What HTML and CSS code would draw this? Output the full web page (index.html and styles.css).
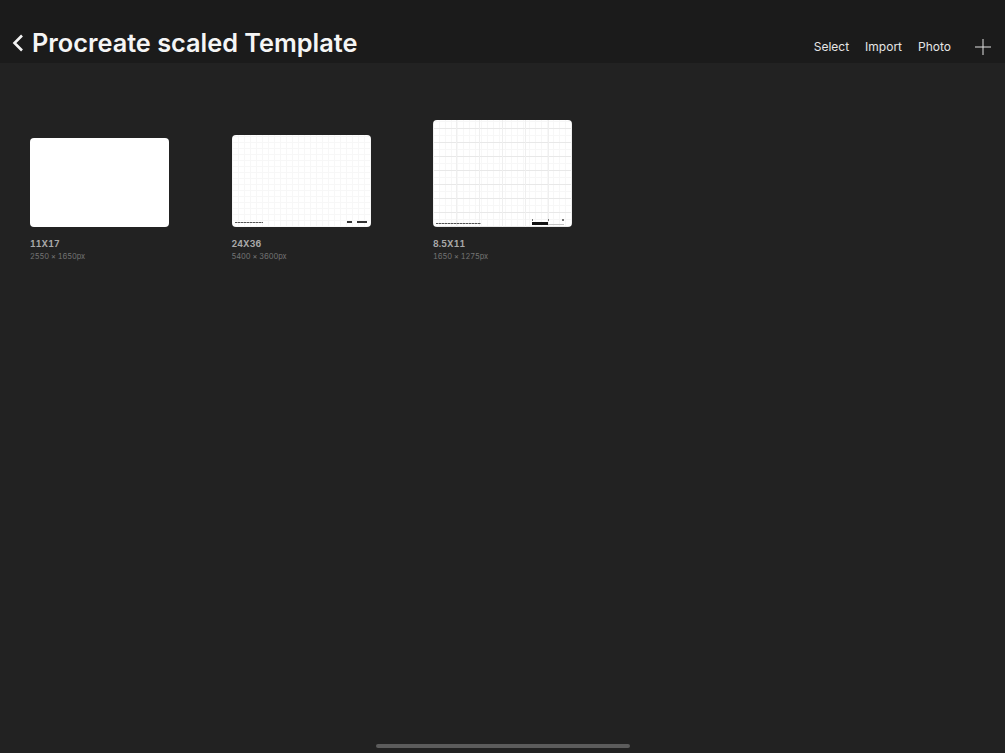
FILE: index.html
```html
<!DOCTYPE html>
<html lang="en">
<head>
<meta charset="utf-8">
<title>Procreate scaled Template</title>
<link rel="stylesheet" href="styles.css">
</head>
<body>
<div class="app">
  <header class="topbar">
    <div class="title-group">
      <svg class="back" width="12" height="18" viewBox="0 0 12 18" aria-hidden="true"><path d="M10 1.5 L2.5 9 L10 16.5" fill="none" stroke="#f4f4f4" stroke-width="2.6"/></svg>
      <h1 class="title">Procreate scaled Template</h1>
    </div>
    <nav class="actions">
      <span class="action">Select</span>
      <span class="action">Import</span>
      <span class="action">Photo</span>
      <svg class="plus" width="16" height="16" viewBox="0 0 16 16" aria-hidden="true"><path d="M8 0V16M0 8H16" stroke="#e2e2e2" stroke-width="1"/></svg>
    </nav>
  </header>
  <main class="gallery">
    <article class="card">
      <div class="thumb thumb-a"></div>
      <div class="name">11X17</div>
      <div class="size">2550 × 1650px</div>
    </article>
    <article class="card">
      <div class="thumb thumb-b grid-fine">
        <div class="foot foot-b">
          <span class="fineprint fineprint-b"></span>
          <span class="bars"><i class="bar bar-s"></i><i class="bar bar-l"></i></span>
        </div>
      </div>
      <div class="name">24X36</div>
      <div class="size">5400 × 3600px</div>
    </article>
    <article class="card">
      <div class="thumb thumb-c grid-wide">
        <div class="foot foot-c">
          <span class="fineprint fineprint-c"></span>
          <span class="scale"><i class="seg seg-dark"></i><i class="seg seg-light"></i></span>
        </div>
      </div>
      <div class="name">8.5X11</div>
      <div class="size">1650 × 1275px</div>
    </article>
  </main>
  <div class="home-wrap"><div class="home"></div></div>
</div>
</body>
</html>
```

FILE: styles.css
```css
* { box-sizing: border-box; }
html, body { margin: 0; height: 100%; }
body {
  background: #222222;
  font-family: Inter, "Liberation Sans", sans-serif;
  overflow: hidden;
}
.app {
  width: 1005px;
  height: 753px;
  display: flex;
  flex-direction: column;
}
.topbar {
  height: 63px;
  flex: none;
  background: #1b1b1b;
  display: flex;
  justify-content: space-between;
  align-items: flex-end;
  padding: 0 14px 6px 12px;
}
.title-group {
  display: flex;
  align-items: center;
  gap: 8px;
  margin-bottom: -3px;
}
.back { display: block; }
.title {
  margin: 0;
  font-size: 25.3px;
  line-height: 34px;
  font-weight: 600;
  color: #f5f5f5;
}
.actions {
  display: flex;
  align-items: center;
  height: 20px;
  gap: 16px;
}
.action {
  font-size: 12px;
  line-height: 16px;
  color: #e6e6e6;
}
.plus { margin-left: 8px; }
.gallery {
  height: 199px;
  flex: none;
  display: flex;
  align-items: flex-end;
  gap: 62.5px;
  padding-left: 30px;
}
.card { width: 139px; }
.thumb {
  width: 139px;
  background: #ffffff;
  border-radius: 4px;
  position: relative;
}
.thumb-a { height: 89px; }
.thumb-b { height: 92px; }
.thumb-c { height: 107px; }
.grid-fine {
  background-image:
    repeating-linear-gradient(90deg, #f7f7f7 0 1px, transparent 1px 6px),
    repeating-linear-gradient(0deg, #f7f7f7 0 1px, transparent 1px 6px);
}
.grid-wide {
  background-image:
    repeating-linear-gradient(90deg, #efefef 0 1px, transparent 1px 23px),
    repeating-linear-gradient(0deg, #e8e8e8 0 1px, transparent 1px 14px),
    repeating-linear-gradient(90deg, #f7f7f7 0 1px, transparent 1px 6px),
    repeating-linear-gradient(0deg, #f7f7f7 0 1px, transparent 1px 7px);
}
.foot {
  position: absolute;
  left: 3px;
  right: 3px;
  bottom: 3px;
  height: 4px;
  display: flex;
  justify-content: space-between;
  align-items: center;
}
.foot-c { bottom: 2px; }
.fineprint {
  display: block;
  height: 1px;
  background: repeating-linear-gradient(90deg, #555 0 2px, #aaa 2px 3px);
}
.fineprint-b { width: 28px; }
.fineprint-c { width: 45px; }
.bars { display: flex; gap: 5px; margin-right: 1px; }
.bar { display: block; height: 2px; background: #333; }
.bar-s { width: 5px; }
.bar-l { width: 10px; }
.scale { display: flex; margin-right: 5px; position: relative; }
.seg { display: block; width: 16px; height: 3px; position: relative; }
.seg-dark { background: #111; }
.seg-light { border-bottom: 1px solid #c4c4c4; }
.seg::before {
  content: "";
  position: absolute;
  left: 0;
  top: -3px;
  width: 1px;
  height: 2px;
  background: #777;
}
.seg-light::after {
  content: "";
  position: absolute;
  right: 0;
  top: -3px;
  width: 2px;
  height: 2px;
  background: #777;
}
.name {
  margin-top: 11px;
  font-size: 8.8px;
  line-height: 11px;
  font-weight: 700;
  font-variant-numeric: tabular-nums;
  letter-spacing: 0.1px;
  color: #a8a8a8;
}
.size {
  margin-top: 3px;
  font-size: 7.5px;
  line-height: 10px;
  font-variant-numeric: tabular-nums;
  letter-spacing: -0.1px;
  color: #747474;
}
.home-wrap {
  margin-top: auto;
  padding-bottom: 5px;
  display: flex;
  justify-content: center;
}
.home {
  width: 254px;
  height: 4px;
  border-radius: 2px;
  background: #5c5c5c;
}
```
